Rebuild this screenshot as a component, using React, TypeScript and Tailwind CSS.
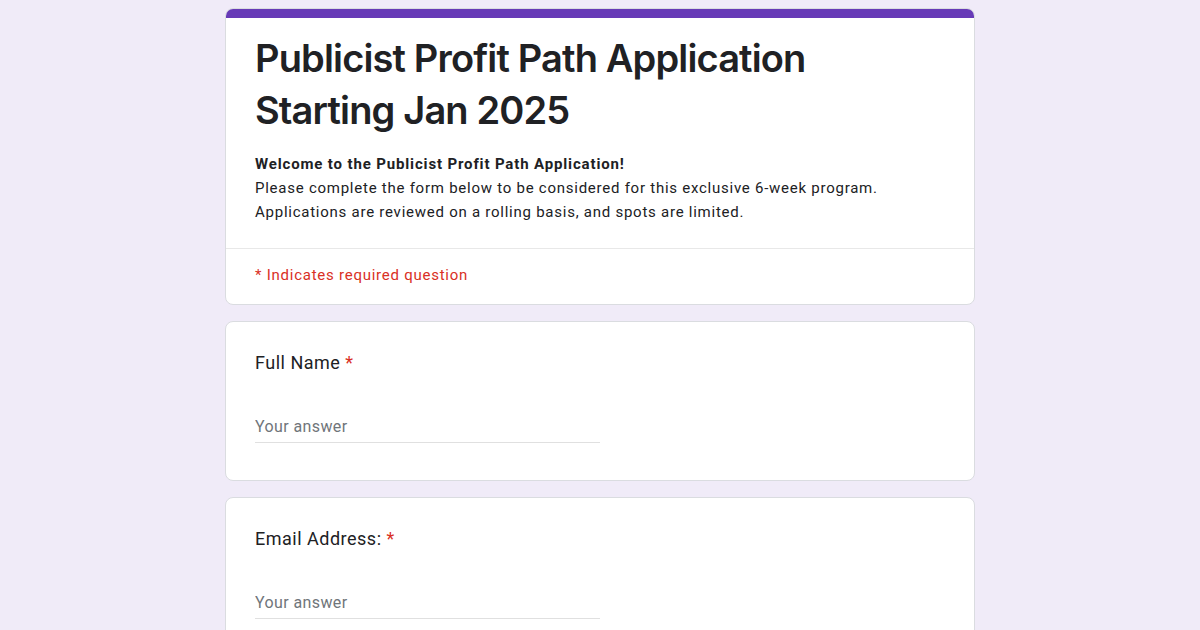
const QUESTIONS = ['Full Name', 'Email Address:'];

const QuestionCard = ({ label }: { label: string }) => (
  <div className="bg-white border border-[#dadce0] rounded-lg px-[29px] pt-[29px] pb-[37px]">
    <div className="text-[18px] leading-6 text-[#202124] tracking-[0.5px]" style={{ fontFamily: 'Roboto, sans-serif' }}>
      {label} <span className="text-[#d93025]">*</span>
    </div>
    <div className="mt-[39px] w-1/2 border-b border-[#e0e0e0] pb-[3px]">
      <input
        placeholder="Your answer"
        className="w-full text-[16px] leading-6 tracking-[0.4px] text-[#202124] placeholder:text-[#70757a] outline-none bg-transparent"
        style={{ fontFamily: 'Roboto, sans-serif' }}
      />
    </div>
  </div>
);

export default function App() {
  return (
    <div className="min-h-[630px] bg-[#f0ebf8] pt-2 pb-8">
      <div className="w-[750px] mx-auto flex flex-col gap-4">
        <div className="bg-white border border-[#dadce0] rounded-lg overflow-hidden">
          <div className="h-[10px] bg-[#673ab7] -mx-px -mt-px" />
          <div className="px-[29px] pt-[14px] pb-[24px] border-b border-[#e8e8e8]">
            <h1
              className="text-[38px] leading-[52px] font-semibold text-[#202124] tracking-[-0.85px]"
              style={{ fontFamily: 'Inter, "Open Sans", sans-serif' }}
            >
              Publicist Profit Path Application Starting Jan 2025
            </h1>
            <div className="mt-[16px] text-[15px] leading-6 text-[#202124] tracking-[0.75px]" style={{ fontFamily: 'Roboto, sans-serif' }}>
              <div className="font-bold tracking-[0.85px]">Welcome to the Publicist Profit Path Application!</div>
              <div>Please complete the form below to be considered for this exclusive 6-week program.</div>
              <div>Applications are reviewed on a rolling basis, and spots are limited.</div>
            </div>
          </div>
          <div className="px-[29px] pt-[14px] pb-[17px] text-[15px] leading-6 tracking-[0.75px] text-[#d93025]" style={{ fontFamily: 'Roboto, sans-serif' }}>
            * Indicates required question
          </div>
        </div>
        {QUESTIONS.map(q => (
          <QuestionCard key={q} label={q} />
        ))}
      </div>
    </div>
  );
}
